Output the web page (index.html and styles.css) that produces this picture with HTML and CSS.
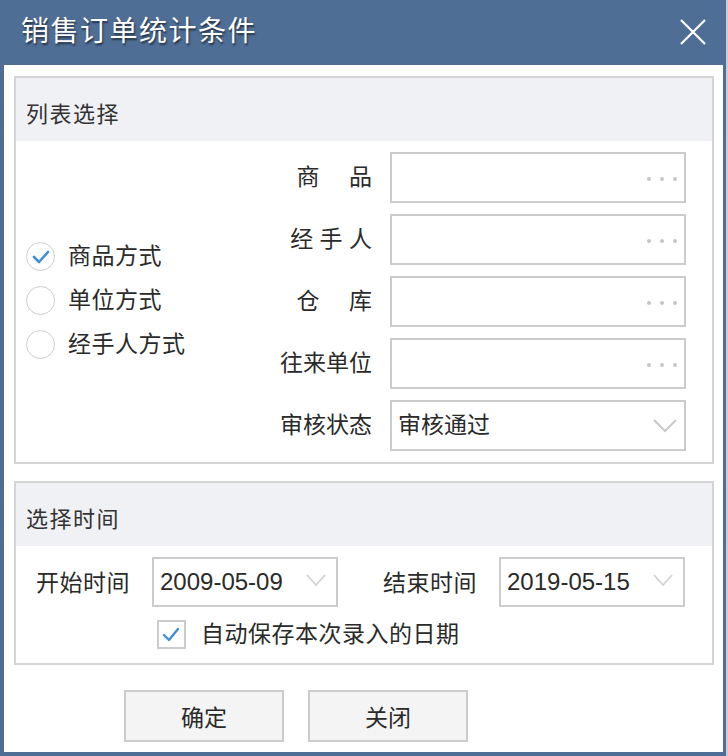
FILE: index.html
```html
<!DOCTYPE html>
<html lang="zh-CN">
<head>
  <meta charset="UTF-8">
  <meta name="viewport" content="width=device-width, initial-scale=1.0">
  <title>销售订单统计条件</title>
  <link rel="stylesheet" href="styles.css">
</head>
<body>
  <div class="dialog">
    <div class="titlebar">
      <span class="title">销售订单统计条件</span>
      <button class="close" type="button" aria-label="关闭">
        <svg width="26" height="26" viewBox="0 0 26 26"><path d="M1 1L25 25M25 1L1 25" stroke="#fff" stroke-width="2.2" fill="none"/></svg>
      </button>
    </div>

    <div class="content">
      <div class="group">
        <div class="group-head">列表选择</div>
        <div class="group-body list-body">
          <div class="radio-list">
            <label class="radio checked">
              <span class="circle">
                <svg width="29" height="29" viewBox="0 0 29 29"><path d="M8 15L13 20L22 10" stroke="#3e8fd6" stroke-width="2.6" fill="none" stroke-linecap="round" stroke-linejoin="round"/></svg>
              </span>
              商品方式
            </label>
            <label class="radio"><span class="circle"></span>单位方式</label>
            <label class="radio"><span class="circle"></span>经手人方式</label>
          </div>

          <div class="fields">
            <div class="field">
              <span class="field-label">商　 品</span>
              <div class="input"><span class="dots"><i></i><i></i><i></i></span></div>
            </div>
            <div class="field">
              <span class="field-label">经 手 人</span>
              <div class="input"><span class="dots"><i></i><i></i><i></i></span></div>
            </div>
            <div class="field">
              <span class="field-label">仓　 库</span>
              <div class="input"><span class="dots"><i></i><i></i><i></i></span></div>
            </div>
            <div class="field">
              <span class="field-label">往来单位</span>
              <div class="input"><span class="dots"><i></i><i></i><i></i></span></div>
            </div>
            <div class="field">
              <span class="field-label">审核状态</span>
              <div class="input select">
                <span class="value">审核通过</span>
                <svg class="chevron" width="24" height="14" viewBox="0 0 24 14"><path d="M1 1L12 12L23 1" stroke="#c9c9c9" stroke-width="2" fill="none"/></svg>
              </div>
            </div>
          </div>
        </div>
      </div>

      <div class="group time-group">
        <div class="group-head">选择时间</div>
        <div class="group-body time-body">
          <div class="time-row">
            <span class="time-label">开始时间</span>
            <div class="input date">
              <span class="value">2009-05-09</span>
              <svg class="chevron" width="20" height="12" viewBox="0 0 20 12"><path d="M1 1L10 11L19 1" stroke="#d2d2d2" stroke-width="1.8" fill="none"/></svg>
            </div>
            <span class="time-label end-label">结束时间</span>
            <div class="input date">
              <span class="value">2019-05-15</span>
              <svg class="chevron" width="20" height="12" viewBox="0 0 20 12"><path d="M1 1L10 11L19 1" stroke="#d2d2d2" stroke-width="1.8" fill="none"/></svg>
            </div>
          </div>
          <label class="check-row">
            <span class="checkbox">
              <svg width="25" height="25" viewBox="0 0 25 25"><path d="M5 13L10 18L19 7" stroke="#3e8fd6" stroke-width="2.4" fill="none" stroke-linecap="round" stroke-linejoin="round"/></svg>
            </span>
            自动保存本次录入的日期
          </label>
        </div>
      </div>

      <div class="buttons">
        <button class="btn" type="button">确定</button>
        <button class="btn" type="button">关闭</button>
      </div>
    </div>
  </div>
</body>
</html>
```

FILE: styles.css
```css
body {
  margin: 0;
  background-color: #c9ced6;
  font-family: "Liberation Sans", "Noto Sans CJK SC", sans-serif;
  font-size: 23px;
  color: #2a2a2a;
}
.dialog {
  width: 726px;
  height: 756px;
  display: flex;
  flex-direction: column;
  background-color: #ffffff;
}
.titlebar {
  height: 65px;
  flex: none;
  display: flex;
  align-items: center;
  justify-content: space-between;
  padding: 0 20px 0 21px;
  background-color: #4f6e96;
}
.title {
  color: #ffffff;
  font-size: 28px;
  letter-spacing: 1.5px;
  line-height: 1;
  text-shadow: 1px 2px 2px rgba(0, 0, 0, 0.55);
  margin-top: -2px;
}
.close {
  width: 26px;
  height: 26px;
  padding: 0;
  border: none;
  background: none;
  display: flex;
  margin-top: -1px;
}
.content {
  flex: 1;
  border: solid #4f6e96;
  border-width: 0 3px 4px 4px;
  padding: 11px 9px 10px 10px;
  display: flex;
  flex-direction: column;
}
.group {
  border: 2px solid #d4d4d4;
}
.time-group {
  margin-top: 17px;
}
.group-head {
  height: 63px;
  display: flex;
  align-items: center;
  padding-left: 10px;
  padding-top: 4px;
  box-sizing: border-box;
  background-color: #eff1f5;
  font-size: 22px;
  letter-spacing: 1.5px;
  color: #333;
}
.list-body {
  display: flex;
}
.radio-list {
  flex: 1;
  display: flex;
  flex-direction: column;
  justify-content: center;
  padding-left: 10px;
  padding-bottom: 2px;
}
.radio {
  display: flex;
  align-items: center;
  height: 44px;
  gap: 13px;
  line-height: 1;
  letter-spacing: 0.5px;
}
.circle {
  width: 29px;
  height: 29px;
  box-sizing: border-box;
  border: 1.5px solid #cdcdcd;
  border-radius: 50%;
  display: flex;
  align-items: center;
  justify-content: center;
}
.circle svg {
  margin: -1.5px;
}
.fields {
  width: 426px;
  display: flex;
  flex-direction: column;
  gap: 11px;
  padding: 11px 26px 11px 0;
}
.field {
  display: flex;
  align-items: center;
  gap: 18px;
}
.field-label {
  width: 112px;
  text-align: right;
  line-height: 1;
  white-space: pre;
}
.input {
  width: 296px;
  height: 51px;
  box-sizing: border-box;
  border: 2px solid #cccccc;
  display: flex;
  align-items: center;
  justify-content: flex-end;
  padding: 0 7px 0 6px;
  background-color: #ffffff;
}
.dots {
  display: flex;
  gap: 9px;
  margin-top: 3px;
}
.dots i {
  width: 4px;
  height: 4px;
  border-radius: 50%;
  background-color: #c6c6c6;
}
.select,
.date {
  justify-content: space-between;
}
.value {
  line-height: 1;
}
.time-body {
  padding: 11px 0 14px 20px;
}
.time-row {
  display: flex;
  align-items: center;
}
.time-label {
  width: 94px;
  line-height: 1;
  margin-right: 22px;
  margin-top: 2px;
  letter-spacing: 0.5px;
}
.end-label {
  margin-left: 45px;
}
.date {
  width: 186px;
  height: 50px;
  padding-right: 10px;
}
.date .value {
  font-size: 24px;
}
.date .chevron {
  margin-top: -4px;
}
.check-row {
  display: flex;
  align-items: center;
  gap: 15px;
  margin: 13px 0 0 121px;
  line-height: 1;
  letter-spacing: 0.5px;
}
.checkbox {
  width: 29px;
  height: 29px;
  box-sizing: border-box;
  border: 2px solid #cccccc;
  display: flex;
}
.buttons {
  display: flex;
  gap: 24px;
  padding-left: 110px;
  margin-top: 25px;
}
.btn {
  width: 160px;
  height: 52px;
  border: 2px solid #cccccc;
  background-color: #f4f4f4;
  font-family: "Liberation Sans", "Noto Sans CJK SC", sans-serif;
  font-size: 23px;
  color: #2a2a2a;
  padding: 0;
}
```
